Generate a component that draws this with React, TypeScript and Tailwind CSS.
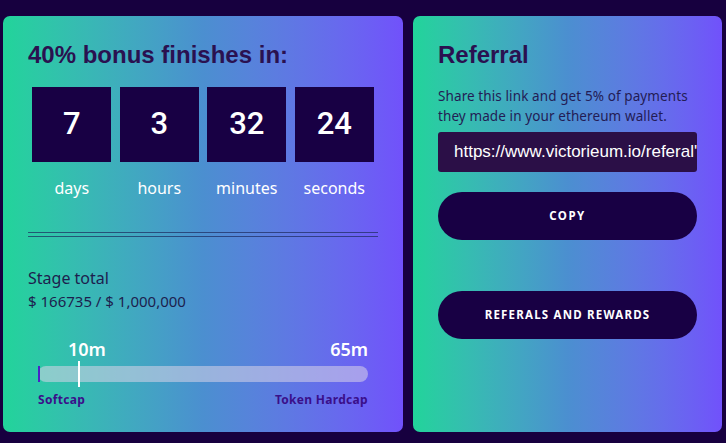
import React from "react";

const poppins = { fontFamily: '"Noto Sans", "Open Sans", sans-serif' };

const countdown = [
  { value: "7", label: "days" },
  { value: "3", label: "hours" },
  { value: "32", label: "minutes" },
  { value: "24", label: "seconds" },
];

function BonusCard() {
  return (
    <section className="flex h-[416px] w-[400px] flex-col rounded-[7px] bg-gradient-to-r from-[#21d49a] via-[#4b8fd0] to-[#7151fb] px-[25px] pt-[25px]">
      <h2 className="font-['Liberation_Sans',Arial,sans-serif] text-[24px] font-bold leading-[28px] text-[#2a1150]">
        40% bonus finishes in:
      </h2>

      <div className="mt-[18px] grid grid-cols-4">
        {countdown.map((item) => (
          <div key={item.label} className="flex flex-col items-center">
            <div className="flex h-[75px] w-[79px] items-center justify-center bg-[#180044] font-['Roboto',sans-serif] text-[31px] font-medium text-white">
              {item.value}
            </div>
            <div className="mt-[14px] text-[16px] leading-[24px] text-white" style={poppins}>
              {item.label}
            </div>
          </div>
        ))}
      </div>

      <div className="mt-[32px] flex flex-col gap-[3px]">
        <div className="h-px bg-[#1c2a5c]/70" />
        <div className="h-px bg-[#1c2a5c]/70" />
      </div>

      <div className="mt-[30px] leading-[23px] text-[#1d1e4e]" style={poppins}>
        <div className="text-[16px]">Stage total</div>
        <div className="text-[15px]">$ 166735 / $ 1,000,000</div>
      </div>

      <div className="mt-[25px] px-[10px]">
        <div className="relative h-[22px] text-[18px] font-semibold leading-[22px] text-white" style={poppins}>
          <span className="absolute left-[30px] top-0">10m</span>
          <span className="absolute right-0 top-0">65m</span>
        </div>
        <div className="relative mt-[6px] h-[16px] rounded-full bg-[#d8d4e8]/55">
          <div className="absolute left-0 top-0 h-[16px] w-[2px] bg-[#4a22c8]" />
          <div className="absolute left-[40px] top-[-5px] h-[26px] w-[2px] bg-white" />
        </div>
        <div className="mt-[10px] flex justify-between text-[12px] font-bold leading-[15px] tracking-[0.3px] text-[#3a0f8a]" style={poppins}>
          <span>Softcap</span>
          <span>Token Hardcap</span>
        </div>
      </div>
    </section>
  );
}

function ReferralCard() {
  return (
    <section className="flex h-[416px] w-[309px] flex-col rounded-[7px] bg-gradient-to-r from-[#21d49a] via-[#4b8fd0] to-[#7151fb] px-[25px] pt-[25px]">
      <h2 className="font-['Liberation_Sans',Arial,sans-serif] text-[24px] font-bold leading-[28px] text-[#2a1150]">
        Referral
      </h2>
      <p className="mt-[17px] w-[252px] text-[13.5px] leading-[20px] tracking-[0.1px] text-[#231c55]" style={poppins}>
        Share this link and get 5% of payments they made in your ethereum wallet.
      </p>
      <div className="mt-[6px] flex h-[40px] items-center overflow-hidden whitespace-nowrap rounded-[3px] bg-[#2b0f47] pl-[16px] font-['Liberation_Sans',Arial,sans-serif] text-[17px] text-white">
        https://www.victorieum.io/referal'
      </div>
      <button
        type="button"
        className="mt-[20px] h-[48px] rounded-full bg-[#180044] text-[11.5px] font-bold tracking-[1.5px] text-white"
        style={poppins}
      >
        COPY
      </button>
      <button
        type="button"
        className="mt-[51px] h-[48px] rounded-full bg-[#180044] text-[11.5px] font-bold tracking-[1.2px] text-white"
        style={poppins}
      >
        REFERALS AND REWARDS
      </button>
    </section>
  );
}

export default function App() {
  return (
    <div className="flex h-[443px] w-[726px] gap-[10px] bg-[#17003f] pl-[3px] pt-[16px]">
      <BonusCard />
      <ReferralCard />
    </div>
  );
}
